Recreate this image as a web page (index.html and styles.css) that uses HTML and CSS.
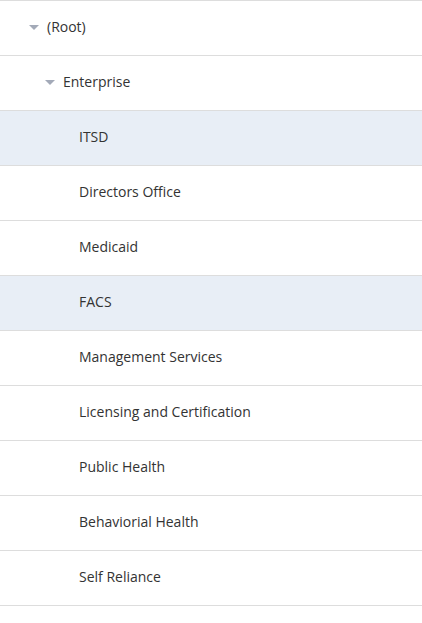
FILE: index.html
```html
<!DOCTYPE html>
<html>
<head>
<meta charset="utf-8">
<link rel="stylesheet" href="styles.css">
</head>
<body>
<ul class="tree">
  <li class="row level-0"><span class="caret"></span><span class="label">(Root)</span></li>
  <li class="row level-1"><span class="caret"></span><span class="label">Enterprise</span></li>
  <li class="row level-2 selected"><span class="label">ITSD</span></li>
  <li class="row level-2"><span class="label">Directors Office</span></li>
  <li class="row level-2"><span class="label">Medicaid</span></li>
  <li class="row level-2 selected"><span class="label">FACS</span></li>
  <li class="row level-2"><span class="label">Management Services</span></li>
  <li class="row level-2"><span class="label">Licensing and Certification</span></li>
  <li class="row level-2"><span class="label">Public Health</span></li>
  <li class="row level-2"><span class="label">Behaviorial Health</span></li>
  <li class="row level-2"><span class="label">Self Reliance</span></li>
</ul>
</body>
</html>
```
FILE: styles.css
```css
html, body {
  margin: 0;
  padding: 0;
  background: #fff;
}
body {
  font-family: "Open Sans", "Liberation Sans", sans-serif;
  font-size: 14px;
  color: #333;
}
.tree {
  list-style: none;
  margin: 0;
  padding: 0;
  border-top: 1px solid #ddd;
}
.row {
  display: flex;
  align-items: center;
  height: 52px;
  padding-bottom: 2px;
  border-bottom: 1px solid #ddd;
  box-sizing: content-box;
}
.row.selected {
  background: #e8eef6;
}
.level-0 { padding-left: 29px; }
.level-1 { padding-left: 45px; }
.level-2 { padding-left: 79px; }
.caret {
  width: 0;
  height: 0;
  border-left: 5px solid transparent;
  border-right: 5px solid transparent;
  border-top: 5px solid #a3aab8;
  margin-right: 8px;
  margin-top: 1px;
}
.label {
  line-height: 20px;
}
```
